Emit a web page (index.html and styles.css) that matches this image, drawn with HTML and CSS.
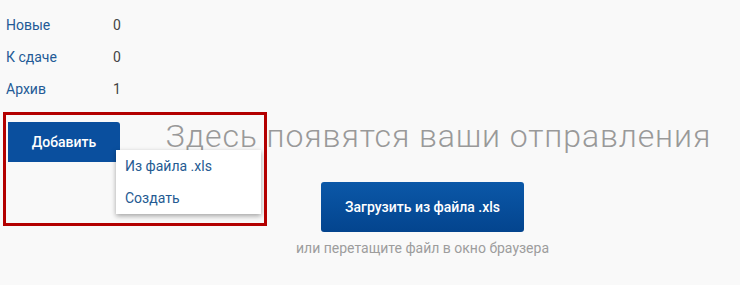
FILE: index.html
```html
<!DOCTYPE html>
<html lang="ru">
<head>
<meta charset="utf-8">
<title>Отправления</title>
<link rel="stylesheet" href="styles.css">
</head>
<body>
<div class="page">
  <ul class="stats">
    <li class="stat"><a class="stat-label" href="#">Новые</a><span class="stat-count">0</span></li>
    <li class="stat"><a class="stat-label" href="#">К сдаче</a><span class="stat-count">0</span></li>
    <li class="stat"><a class="stat-label" href="#">Архив</a><span class="stat-count">1</span></li>
  </ul>
  <div class="workspace">
    <div class="add-wrap">
      <button class="add-btn" type="button">Добавить</button>
      <ul class="menu">
        <li class="menu-item">Из файла .xls</li>
        <li class="menu-item">Создать</li>
      </ul>
    </div>
    <main class="empty">
      <h1 class="empty-title">Здесь появятся ваши отправления</h1>
      <button class="upload-btn" type="button">Загрузить из файла .xls</button>
      <p class="empty-hint">или перетащите файл в окно браузера</p>
    </main>
    <div class="annot-frame"></div>
  </div>
</div>
</body>
</html>
```
FILE: styles.css
```css
* { box-sizing: border-box; }
html, body {
  margin: 0;
  padding: 0;
  background: #f9f9f9;
  font-family: Roboto, "Liberation Sans", Arial, sans-serif;
}
.page {
  width: 740px;
  height: 285px;
  overflow: hidden;
}
.stats {
  list-style: none;
  margin: 0;
  padding: 9px 0 0 6px;
}
.stat {
  display: flex;
  align-items: center;
  height: 32px;
  font-size: 14px;
}
.stat-label {
  width: 107px;
  color: #235a96;
  text-decoration: none;
}
.stat-count {
  color: #444;
}
.workspace {
  position: relative;
  display: flex;
  margin-top: 17px;
}
.add-wrap {
  position: relative;
  width: 112px;
  margin-left: 8px;
  flex: none;
}
.add-btn {
  width: 112px;
  height: 40px;
  border: 0;
  border-radius: 0 3px 0 0;
  background: #0a4f9e;
  color: #fff;
  font-family: inherit;
  font-size: 14px;
  font-weight: 500;
  padding: 0;
}
.menu {
  position: absolute;
  left: 108px;
  top: 28px;
  width: 145px;
  margin: 0;
  padding: 0;
  list-style: none;
  background: #fff;
  box-shadow: 0 2px 5px rgba(0,0,0,0.35);
  z-index: 2;
}
.menu-item {
  height: 32px;
  line-height: 32px;
  padding-left: 9px;
  font-size: 14px;
  color: #255a92;
}
.empty {
  flex: 1;
  margin-left: -15px;
  display: flex;
  flex-direction: column;
  align-items: center;
}
.empty-title {
  margin: 0;
  padding-left: 32px;
  font-size: 32px;
  line-height: 28px;
  font-weight: 300;
  letter-spacing: 0.9px;
  color: #999;
  white-space: nowrap;
}
.upload-btn {
  margin-top: 32px;
  width: 203px;
  height: 50px;
  border: 0;
  border-radius: 3px;
  background: linear-gradient(#0b58a8, #03448e);
  color: #fff;
  font-family: inherit;
  font-size: 14px;
  font-weight: 500;
  padding: 0;
}
.empty-hint {
  margin: 6px 0 0;
  font-size: 14px;
  line-height: 20px;
  color: #9d9d9d;
}
.annot-frame {
  position: absolute;
  left: 3px;
  top: -10px;
  width: 264px;
  height: 114px;
  border: 3px solid #b30000;
  z-index: 3;
  pointer-events: none;
}
```
